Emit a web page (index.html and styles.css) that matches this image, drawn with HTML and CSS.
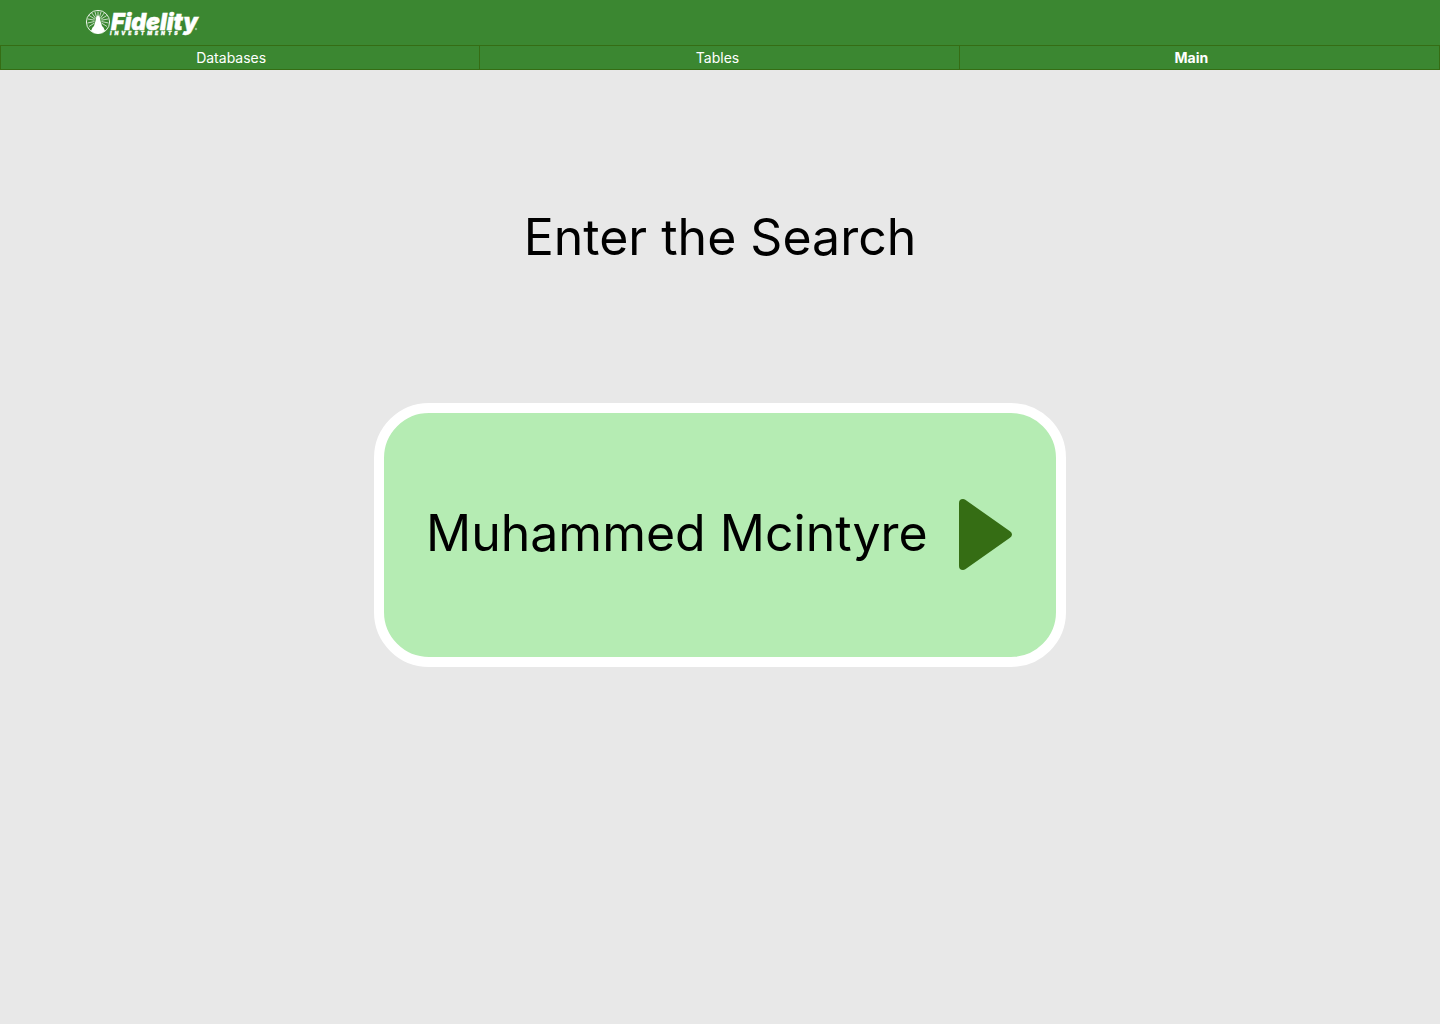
FILE: index.html
```html
<!DOCTYPE html>
<html lang="en">
<head>
  <meta charset="utf-8">
  <meta name="viewport" content="width=device-width, initial-scale=1">
  <title>Fidelity Investments – Search</title>
  <link rel="stylesheet" href="styles.css">
</head>
<body>
  <header class="site-header">
    <a class="logo" href="#" aria-label="Fidelity Investments">
      <svg class="logo-art" width="120" height="32" viewBox="0 0 120 32">
        <g fill="none" stroke="#fff">
          <circle cx="14" cy="16" r="11.6" stroke-width="0.9"/>
          <path stroke-width="0.7" d="M14 12V5.500M12.800 12 11 6M15.200 12 17 6M11.800 12.500 7.800 7M16.200 12.500 20.200 7M11 13.200 5.200 9.500M17 13.200 22.800 9.500M10.500 14.200 4 13M17.500 14.200 24 13M10.500 15.500 3.500 17M17.500 15.500 24.500 17M10.500 17 5 20.500M17.500 17 23 20.500"/>
        </g>
        <path fill="#fff" d="M14 9 16 12 16.500 15 18 20 19.500 21.500 21 25Q18 27.600 14 27.600T7 25L8.500 21.500 10 20 11.500 15 12 12Z"/>
        <text class="wordmark" x="27" y="24">Fidelity</text>
        <text class="tagline" x="26" y="29">INVESTMENTS</text>
        <circle cx="112" cy="23" r="0.800" fill="none" stroke="#fff" stroke-width="0.500"/>
      </svg>
    </a>
  </header>
  <nav class="tabs" aria-label="Sections">
    <a class="tab tab-databases" href="#">Databases</a>
    <a class="tab tab-tables" href="#">Tables</a>
    <a class="tab tab-main" href="#" aria-current="page">Main</a>
  </nav>
  <main class="content">
    <h1 class="title"><label for="search">Enter the Search</label></h1>
    <form class="search">
      <input class="search-input" id="search" type="text" value="Muhammed Mcintyre">
      <button class="search-button" type="submit" aria-label="Search">
        <svg class="arrow" width="53" height="71" viewBox="0 0 53 71">
          <path fill="#356d14" d="M0 4Q0 0 4 0Q5.200 0 6.300 0.800L51 32.200Q53 33.600 53 35.500T51 38.800L6.300 70.200Q5.200 71 4 71Q0 71 0 67Z"/>
        </svg>
      </button>
    </form>
  </main>
</body>
</html>
```
FILE: styles.css
```css
* {
  box-sizing: border-box;
}

body {
  margin: 0;
  min-height: 100vh;
  background: #e8e8e8;
  color: #000;
  font-family: Inter, "Liberation Sans", sans-serif;
}

.site-header {
  display: flex;
  padding: 6px 84px 7px;
  background: #3b8731;
}

.logo,
.logo-art {
  display: block;
}

.logo-art {
  overflow: visible;
}

.wordmark {
  fill: #fff;
  stroke: #fff;
  stroke-width: 0.5px;
  font: italic 900 23px Inter, sans-serif;
}

.tagline {
  fill: #fff;
  stroke: #fff;
  stroke-width: 0.3px;
  font: italic 900 5px Inter, sans-serif;
  letter-spacing: 3px;
}

.tabs {
  display: grid;
  grid-template-columns: repeat(3, 1fr);
  border: 1px solid #356d14;
  background: #3b8731;
}

.tab {
  padding-right: 4px;
  border-right: 1px solid #356d14;
  color: #fff;
  font-size: 14px;
  line-height: 23px;
  text-align: center;
  text-decoration: none;
}

.tab-databases {
  padding-right: 18px;
}

.tab-main {
  padding-right: 16px;
  border-right: 0;
  font-weight: 700;
}

.content {
  display: flex;
  flex-direction: column;
  align-items: center;
  gap: 134px;
  padding: 136px 24px 48px;
}

.title {
  margin: 0;
  font-size: 50px;
  font-weight: 400;
  line-height: 63px;
}

.search {
  display: flex;
  align-items: center;
  width: 100%;
  max-width: 692px;
  padding: 86px 44px 86px 42px;
  border: 10px solid #fff;
  border-radius: 55px;
  background: #b5ecb3;
}

.search-input {
  flex: 1;
  min-width: 0;
  height: 72px;
  padding: 0 0 4px;
  border: 0;
  background: transparent;
  color: inherit;
  font: inherit;
  font-size: 50px;
}

.search-button {
  flex: none;
  padding: 0 0 1px;
  border: 0;
  background: none;
  cursor: pointer;
}

.arrow {
  display: block;
}
```
